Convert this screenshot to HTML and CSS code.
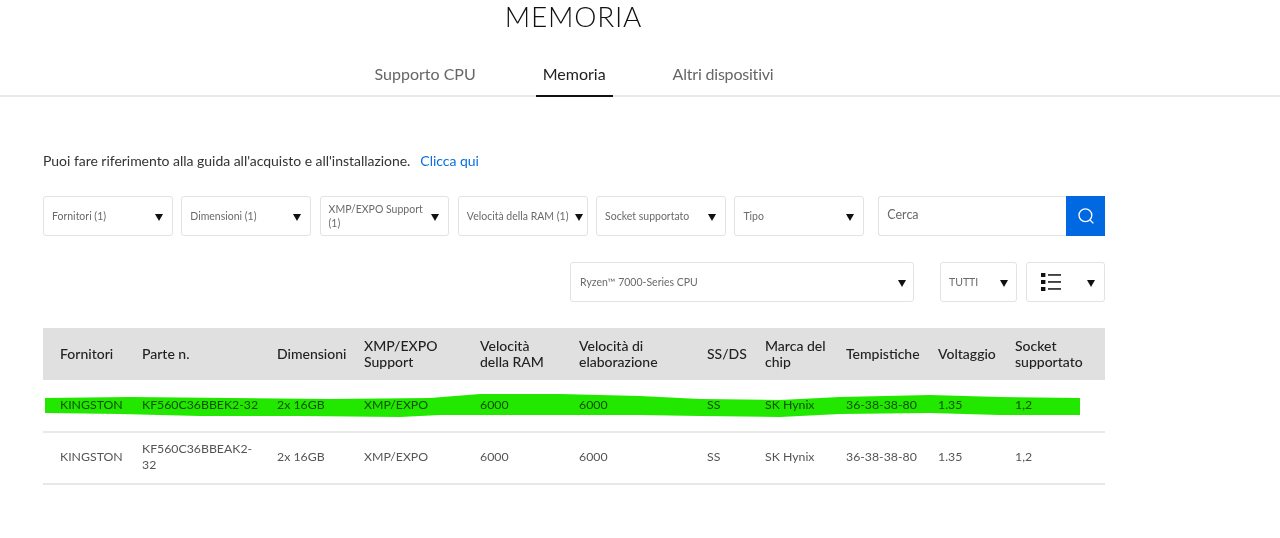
FILE: index.html
```html
<!DOCTYPE html>
<html lang="it">
<head>
<meta charset="utf-8">
<title>Memoria</title>
<link rel="stylesheet" href="styles.css">
</head>
<body>
<header class="head">
  <h1 class="title">MEMORIA</h1>
  <nav class="tabs">
    <a class="tab">Supporto CPU</a>
    <a class="tab active">Memoria</a>
    <a class="tab narrow">Altri dispositivi</a>
  </nav>
</header>
<main class="content">
  <p class="guide">Puoi fare riferimento alla guida all'acquisto e all'installazione.<a class="link">Clicca qui</a></p>
  <div class="filters">
    <div class="select"><span class="label">Fornitori (1)</span><i class="arrow"></i></div>
    <div class="select"><span class="label">Dimensioni (1)</span><i class="arrow"></i></div>
    <div class="select"><span class="label">XMP/EXPO Support (1)</span><i class="arrow"></i></div>
    <div class="select tight"><span class="label">Velocità della RAM (1)</span><i class="arrow"></i></div>
    <div class="select"><span class="label">Socket supportato</span><i class="arrow"></i></div>
    <div class="select"><span class="label">Tipo</span><i class="arrow"></i></div>
    <div class="search">
      <span class="search-text">Cerca</span>
      <span class="search-btn">
        <svg width="18" height="18" viewBox="0 0 18 18" fill="none" stroke="#fff" stroke-width="1.3"><circle cx="8.4" cy="8.2" r="6.4"/><path d="M13 13l3.4 3.4"/></svg>
      </span>
    </div>
  </div>
  <div class="options">
    <div class="select cpu"><span class="label">Ryzen™ 7000-Series CPU</span><i class="arrow"></i></div>
    <div class="select all"><span class="label">TUTTI</span><i class="arrow"></i></div>
    <div class="select view">
      <svg class="list-icon" width="20" height="20" viewBox="0 0 20 20" fill="#111"><rect x="0" y="1" width="4.4" height="4"/><rect x="0" y="8" width="4.4" height="4"/><rect x="0" y="15" width="4.4" height="4"/><rect x="7" y="2.2" width="13" height="1.5"/><rect x="7" y="9.2" width="13" height="1.5"/><rect x="7" y="16.2" width="13" height="1.5"/></svg>
      <i class="arrow"></i>
    </div>
  </div>
  <div class="table-wrap">
    <table class="grid">
      <colgroup>
        <col class="c1"><col class="c2"><col class="c3"><col class="c4"><col class="c5"><col class="c6"><col class="c7"><col class="c8"><col class="c9"><col class="c10"><col class="c11">
      </colgroup>
      <thead>
        <tr>
          <th>Fornitori</th><th>Parte n.</th><th>Dimensioni</th><th>XMP/EXPO Support</th><th>Velocità<br>della RAM</th><th>Velocità di elaborazione</th><th>SS/DS</th><th>Marca del chip</th><th>Tempistiche</th><th>Voltaggio</th><th>Socket supportato</th>
        </tr>
      </thead>
      <tbody>
        <tr>
          <td>KINGSTON</td><td>KF560C36BBEK2-32</td><td>2x 16GB</td><td>XMP/EXPO</td><td>6000</td><td>6000</td><td>SS</td><td>SK Hynix</td><td>36-38-38-80</td><td>1.35</td><td>1,2</td>
        </tr>
        <tr>
          <td>KINGSTON</td><td>KF560C36BBEAK2-32</td><td>2x 16GB</td><td>XMP/EXPO</td><td>6000</td><td>6000</td><td>SS</td><td>SK Hynix</td><td>36-38-38-80</td><td>1.35</td><td>1,2</td>
        </tr>
      </tbody>
    </table>
    <svg class="marker" width="1062" height="52" viewBox="43 380 1062 52"><path fill="#22e800" d="M45 398 L130 397 L230 398 L330 399 L430 398 L480 394 L560 394 L640 396 L700 399 L780 400 L840 397 L930 395 L1000 397 L1080 398 L1080 415 L1000 415 L930 413 L840 414 L780 417 L700 416 L640 415 L560 415 L440 415 L400 417 L300 416 L200 416 L120 414 L45 413 Z"/></svg>
  </div>
</main>
</body>
</html>
```

FILE: styles.css
```css
* { box-sizing: border-box; }
html, body { margin: 0; padding: 0; }
body {
  font-family: "Lato", "Liberation Sans", sans-serif;
  color: #222;
  background: #fff;
  height: 538px;
  overflow: hidden;
}
.head {
  border-bottom: 2px solid #e8e8e8;
  height: 97px;
  padding-right: 132px;
  display: flex;
  flex-direction: column;
  align-items: center;
}
.title {
  margin: -1px 0 0 -1px;
  font-size: 28px;
  line-height: 34px;
  font-weight: 300;
  letter-spacing: 0.8px;
  color: #111;
}
.tabs {
  display: flex;
  gap: 53px;
  margin-top: 25px;
}
.tab {
  height: 39px;
  padding: 0 7px;
  font-size: 16px;
  line-height: 32px;
  color: #666;
  white-space: nowrap;
}
.tab.narrow { letter-spacing: -0.2px; }
.tab.active {
  color: #222;
  border-bottom: 2px solid #111;
}
.content {
  width: 1062px;
  margin-left: 43px;
}
.guide {
  margin: 54px 0 0;
  font-size: 14px;
  line-height: 20px;
  letter-spacing: -0.03px;
  color: #333;
}
.link {
  color: #0a6fe0;
  margin-left: 10px;
}
.filters {
  display: flex;
  gap: 8.4px;
  margin-top: 25px;
}
.select {
  width: 130px;
  height: 40px;
  border: 1px solid #e3e3e3;
  border-radius: 3px;
  display: flex;
  align-items: center;
  padding: 0 9px 0 8px;
  background: #fff;
}
.select.tight { padding-right: 4px; }
.label {
  flex: 1;
  font-size: 10.5px;
  line-height: 14px;
  color: #6a6a6a;
  margin-top: -1px;
}
.arrow {
  flex: none;
  width: 0;
  height: 0;
  margin-top: 2px;
  border-left: 4px solid transparent;
  border-right: 4px solid transparent;
  border-top: 7px solid #111;
}
.search {
  margin-left: 5.6px;
  width: 227px;
  height: 40px;
  border: 1px solid #e3e3e3;
  border-right: 0;
  border-radius: 3px 0 0 3px;
  display: flex;
  align-items: center;
}
.search-text {
  flex: 1;
  padding-left: 8px;
  font-size: 12.5px;
  margin-top: -3px;
  color: #6a6a6a;
}
.search-btn {
  width: 39px;
  height: 40px;
  margin: -1px 0;
  background: #0068e0;
  display: flex;
  align-items: center;
  justify-content: center;
}
.options {
  display: flex;
  justify-content: flex-end;
  margin-top: 26px;
}
.select.cpu { width: 344px; margin-right: 26px; padding-left: 9px; padding-right: 7px; }
.select.all { width: 77px; margin-right: 9px; padding-right: 8px; }
.select.view { width: 79px; justify-content: space-between; padding-left: 14px; }
.list-icon { flex: none; }
.table-wrap {
  position: relative;
  margin-top: 26px;
}
.grid {
  width: 1062px;
  table-layout: fixed;
  border-collapse: collapse;
}
.c1 { width: 99px; }
.c2 { width: 135px; }
.c3 { width: 87px; }
.c4 { width: 116px; }
.c5 { width: 99px; }
.c6 { width: 128px; }
.c7 { width: 58px; }
.c8 { width: 81px; }
.c9 { width: 92px; }
.c10 { width: 77px; }
.c11 { width: 90px; }
th, td {
  padding: 0 4px 0 0;
  text-align: left;
  vertical-align: middle;
}
th:first-child, td:first-child { padding-left: 17px; }
th {
  background: #e0e0e0;
  height: 52px;
  font-size: 14px;
  line-height: 16px;
  font-weight: 500;
  color: #222;
}
td {
  height: 52px;
  padding-right: 12px;
  padding-bottom: 2px;
  font-size: 12.3px;
  line-height: 16px;
  color: #555;
  border-bottom: 2px solid #e8e8e8;
}
.marker {
  position: absolute;
  left: 0;
  top: 52px;
  mix-blend-mode: multiply;
}
```
